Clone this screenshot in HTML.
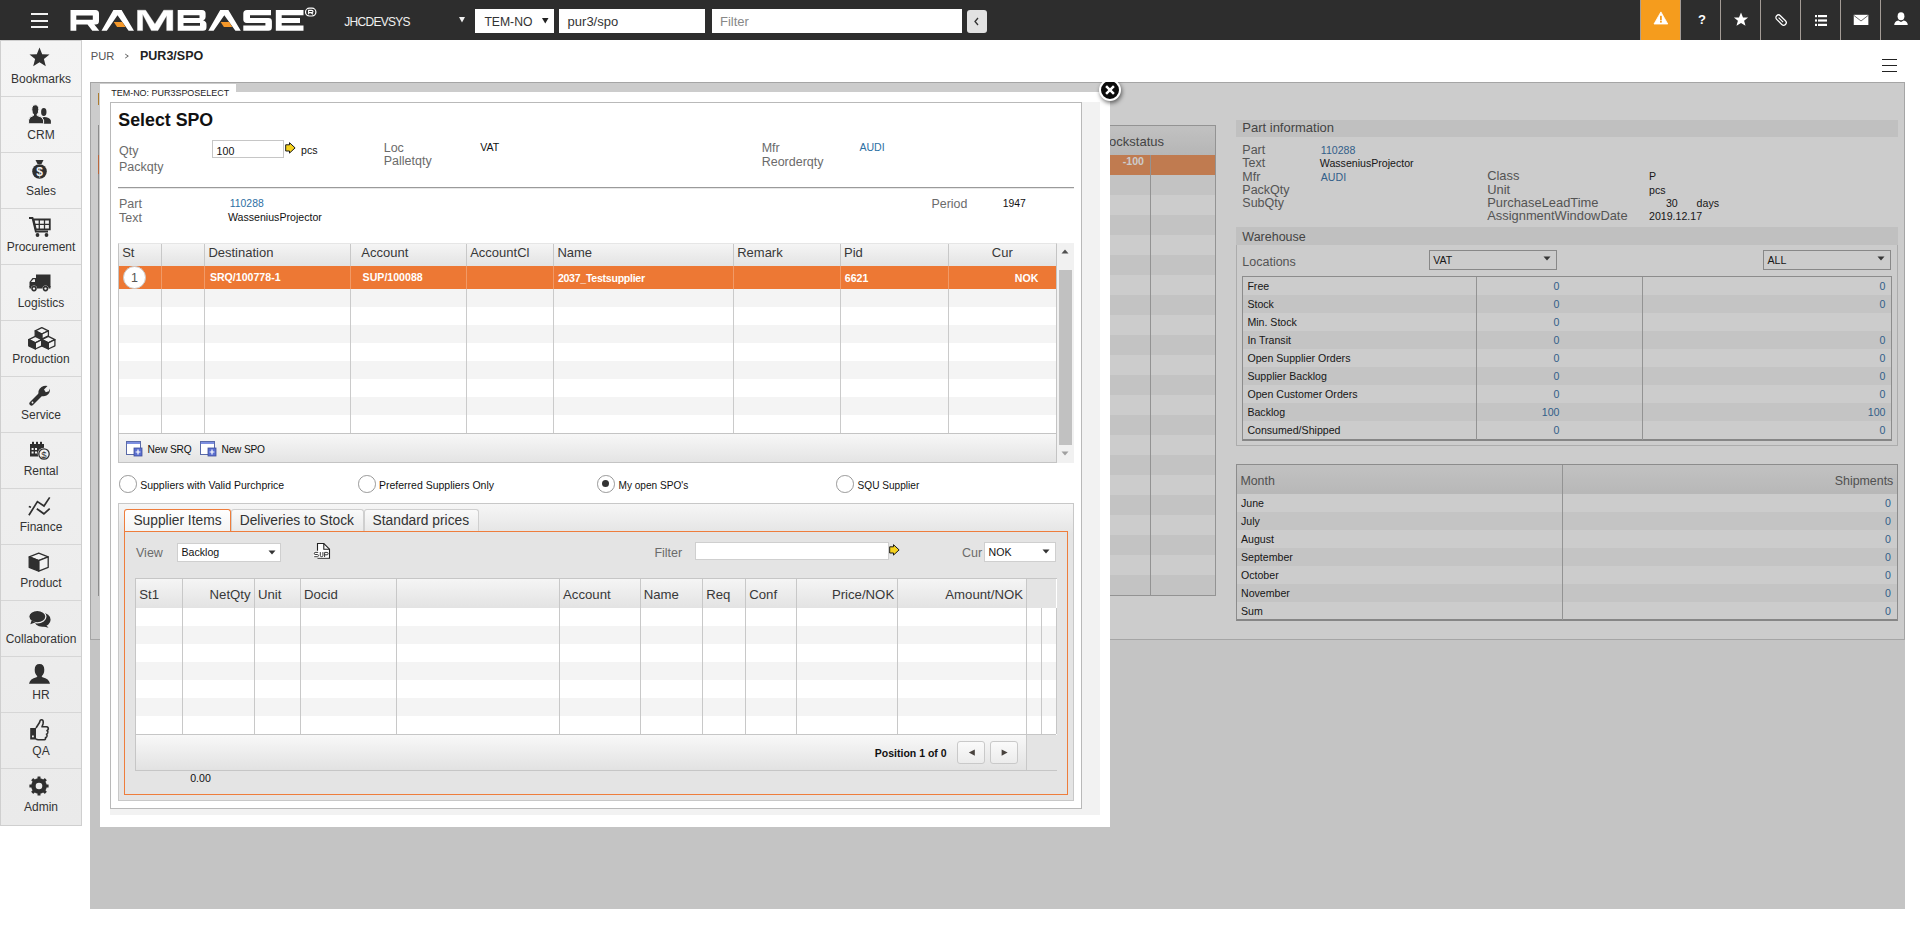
<!DOCTYPE html>
<html><head><meta charset="utf-8"><title>RamBase</title>
<style>
html,body{margin:0;padding:0;}
body{width:1920px;height:937px;overflow:hidden;position:relative;background:#fff;font-family:"Liberation Sans",sans-serif;}
.t{position:absolute;line-height:1;white-space:nowrap;}
.r{position:absolute;box-sizing:border-box;}
</style></head><body>
<div class="r" style="left:0px;top:0px;width:1920px;height:40px;background:#2d2d2d;"></div>
<div class="r" style="left:31px;top:12.7px;width:17px;height:2px;background:#f2f2f2;"></div>
<div class="r" style="left:31px;top:19.7px;width:17px;height:2px;background:#f2f2f2;"></div>
<div class="r" style="left:31px;top:25.7px;width:17px;height:2px;background:#f2f2f2;"></div>
<svg class="r" style="left:0;top:0" width="330" height="40" viewBox="0 0 330 40">
<path fill="#fff" fill-rule="evenodd" d="
M70.5 10 H95.5 Q99 10 99 13.5 V21 Q99 24.5 95.5 24.5 H94.3 L99.3 30.8 H92.3 L87.5 24.5 H76.3 V30.8 H70.5 Z
M76.3 15.6 V19.8 H92.8 V15.6 Z"/>
<path fill="#fff" fill-rule="evenodd" d="M101.5 30.8 L113.4 10 H121.6 L134 30.8 H128.6 L117.5 15.3 L106.8 30.8 Z"/>
<path fill="#f4982a" d="M113.8 22.1 H122.3 L125.5 27 H117.1 Z"/>
<path fill="#fff" stroke="#fff" stroke-width="0.4" stroke-linejoin="round" d="M137.5 10.2 H145.6 L154.9 24.2 L163.7 10.2 H172.8 V30.6 H166.7 V15.4 L157.9 30.6 H151.4 L142.6 14.1 V30.6 H137.5 Z"/>
<path fill="#fff" fill-rule="evenodd" d="M177.7 10 H202 Q205.6 10 205.6 13.5 V17 Q205.6 19.8 203.2 20.6 Q206.5 21.4 206.5 24.5 V27.3 Q206.5 30.8 203 30.8 H177.7 Z
M183.5 15.3 V18 H199.5 V15.3 Z M183.5 23.1 V25.8 H200 V23.1 Z"/>
<path fill="#fff" fill-rule="evenodd" d="M208.3 30.8 L220.2 10 H228.4 L240.8 30.8 H235.4 L224.3 15.3 L213.6 30.8 Z"/>
<path fill="#f4982a" d="M220.6 22.1 H229.1 L232.3 27 H223.9 Z"/>
<path fill="#fff" d="M247 10 H271 V15.2 H250 V18.1 H268.5 Q271.9 18.1 271.9 21.5 V27.3 Q271.9 30.8 268.5 30.8 H243.3 V25.6 H265.4 V22.9 H246.8 Q243.3 22.9 243.3 19.5 V13.5 Q243.3 10 247 10 Z"/>
<path fill="#fff" d="M275.8 10 H303.5 V15.2 H281.7 V18.1 H300 V22.9 H281.7 V25.6 H303.5 V30.8 H275.8 Z"/>
<rect x="305.5" y="8.2" width="10.4" height="7.8" rx="3.9" fill="none" stroke="#fff" stroke-width="1.2"/>
<path fill="none" stroke="#fff" stroke-width="1.1" d="M308.6 14.2 V10.4 H311.6 Q313 10.4 313 11.5 Q313 12.6 311.6 12.6 H308.6 M311 12.6 L313 14.2"/>
</svg>
<div class="t" style="top:16.00px;font-size:12px;color:#f0f0f0;left:344.20px;letter-spacing:-0.7px;">JHCDEVSYS</div>
<svg class="r" style="left:459px;top:17px;" width="7" height="6" viewBox="0 0 7 6"><path d="M0 0 H6 L3 5.5 Z" fill="#f0f0f0"/></svg>
<div class="r" style="left:475px;top:9px;width:79px;height:24px;background:#fff;"></div>
<div class="t" style="top:16.00px;font-size:12.2px;color:#333;left:484.40px;">TEM-NO</div>
<svg class="r" style="left:541.5px;top:17.5px;" width="7" height="6" viewBox="0 0 7 6"><path d="M0 0 H6.5 L3.25 5.5 Z" fill="#222"/></svg>
<div class="r" style="left:559px;top:9px;width:146px;height:24px;background:#fff;"></div>
<div class="t" style="top:15.00px;font-size:13px;color:#333;left:567.60px;">pur3/spo</div>
<div class="r" style="left:712px;top:9px;width:250px;height:24px;background:#fff;"></div>
<div class="t" style="top:15.00px;font-size:13px;color:#888;left:720.00px;">Filter</div>
<div class="r" style="left:967px;top:9.5px;width:19.5px;height:23px;background:#e2e2e2;border-radius:3px;"></div>
<svg class="r" style="left:973px;top:17px;" width="8" height="9" viewBox="0 0 8 9"><path d="M5 1 L2 4.5 L5 8" fill="none" stroke="#333" stroke-width="1.3"/></svg>
<div class="r" style="left:1641px;top:0px;width:39px;height:40px;background:#f59c1d;"></div>
<div class="r" style="left:1640px;top:0px;width:1px;height:40px;background:#a39b95;"></div>
<div class="r" style="left:1680px;top:0px;width:1px;height:40px;background:#a39b95;"></div>
<div class="r" style="left:1720px;top:0px;width:1px;height:40px;background:#a39b95;"></div>
<div class="r" style="left:1760px;top:0px;width:1px;height:40px;background:#a39b95;"></div>
<div class="r" style="left:1800px;top:0px;width:1px;height:40px;background:#a39b95;"></div>
<div class="r" style="left:1840px;top:0px;width:1px;height:40px;background:#a39b95;"></div>
<div class="r" style="left:1880px;top:0px;width:1px;height:40px;background:#a39b95;"></div>
<svg class="r" style="left:1650px;top:9.4px;" width="22" height="18" viewBox="0 0 22 18"><path d="M4 15 L10.9 2.9 L17.8 15 Z" fill="#fff" stroke="#fff" stroke-width="0.8" stroke-linejoin="round"/><rect x="10" y="6.8" width="1.8" height="4.6" fill="#f59c1d"/><rect x="10" y="12" width="1.8" height="1.6" fill="#f59c1d"/></svg>
<div class="t" style="top:13.00px;font-size:13px;color:#fff;font-weight:700;left:1401.90px;width:600px;text-align:center;">?</div>
<svg class="r" style="left:1733px;top:12px;" width="17" height="15" viewBox="0 0 17 15"><path d="M8 0.5 L10 5.4 L15.1 5.6 L11.1 8.8 L12.5 13.7 L8 10.9 L3.5 13.7 L4.9 8.8 L0.9 5.6 L6 5.4 Z" fill="#fff"/></svg>
<svg class="r" style="left:1773px;top:12px;" width="16" height="16" viewBox="0 0 16 16"><g transform="rotate(-45 8 8)"><rect x="5.4" y="1.9" width="5.2" height="12.4" rx="2.6" fill="none" stroke="#fff" stroke-width="1.3"/><path d="M8 4.6 V11" stroke="#fff" stroke-width="1.1"/></g></svg>
<svg class="r" style="left:1813px;top:13px;" width="16" height="14" viewBox="0 0 16 14"><rect x="2" y="2" width="2" height="2.2" fill="#fff"/><rect x="5" y="2" width="9" height="2.2" fill="#fff"/><rect x="2" y="6.4" width="2" height="2.2" fill="#fff"/><rect x="5" y="6.4" width="9" height="2.2" fill="#fff"/><rect x="2" y="10.8" width="2" height="2.2" fill="#fff"/><rect x="5" y="10.8" width="9" height="2.2" fill="#fff"/></svg>
<svg class="r" style="left:1853px;top:14px;" width="16" height="12" viewBox="0 0 16 12"><rect x="0.75" y="0.8" width="14.6" height="10.2" fill="#fff"/><path d="M1 1.5 L8 7 L15 1.5" fill="none" stroke="#2d2d2d" stroke-width="0.7"/></svg>
<svg class="r" style="left:1893px;top:12px;" width="16" height="14" viewBox="0 0 16 14"><ellipse cx="8" cy="4.3" rx="3.4" ry="4" fill="#fff"/><path d="M1.2 13 Q1.5 9.5 5.3 8.6 L8 10 L10.7 8.6 Q14.5 9.5 14.8 13 Z" fill="#fff"/></svg>
<div class="r" style="left:0px;top:40px;width:82px;height:786px;background:linear-gradient(#f4f4f4,#eaeaea);border-left:1px solid #cfcfcf;border-right:1px solid #cfcfcf;border-top:1px solid #cfcfcf;border-bottom:1px solid #cfcfcf;"></div>
<div class="t" style="top:73.00px;font-size:12px;color:#333;left:-259.00px;width:600px;text-align:center;">Bookmarks</div>
<div class="r" style="left:1px;top:96px;width:80px;height:1px;background:#d6d6d6;"></div>
<div class="t" style="top:129.00px;font-size:12px;color:#333;left:-259.00px;width:600px;text-align:center;">CRM</div>
<div class="r" style="left:1px;top:152px;width:80px;height:1px;background:#d6d6d6;"></div>
<div class="t" style="top:185.00px;font-size:12px;color:#333;left:-259.00px;width:600px;text-align:center;">Sales</div>
<div class="r" style="left:1px;top:208px;width:80px;height:1px;background:#d6d6d6;"></div>
<div class="t" style="top:241.00px;font-size:12px;color:#333;left:-259.00px;width:600px;text-align:center;">Procurement</div>
<div class="r" style="left:1px;top:264px;width:80px;height:1px;background:#d6d6d6;"></div>
<div class="t" style="top:297.00px;font-size:12px;color:#333;left:-259.00px;width:600px;text-align:center;">Logistics</div>
<div class="r" style="left:1px;top:320px;width:80px;height:1px;background:#d6d6d6;"></div>
<div class="t" style="top:353.00px;font-size:12px;color:#333;left:-259.00px;width:600px;text-align:center;">Production</div>
<div class="r" style="left:1px;top:376px;width:80px;height:1px;background:#d6d6d6;"></div>
<div class="t" style="top:409.00px;font-size:12px;color:#333;left:-259.00px;width:600px;text-align:center;">Service</div>
<div class="r" style="left:1px;top:432px;width:80px;height:1px;background:#d6d6d6;"></div>
<div class="t" style="top:465.00px;font-size:12px;color:#333;left:-259.00px;width:600px;text-align:center;">Rental</div>
<div class="r" style="left:1px;top:488px;width:80px;height:1px;background:#d6d6d6;"></div>
<div class="t" style="top:521.00px;font-size:12px;color:#333;left:-259.00px;width:600px;text-align:center;">Finance</div>
<div class="r" style="left:1px;top:544px;width:80px;height:1px;background:#d6d6d6;"></div>
<div class="t" style="top:577.00px;font-size:12px;color:#333;left:-259.00px;width:600px;text-align:center;">Product</div>
<div class="r" style="left:1px;top:600px;width:80px;height:1px;background:#d6d6d6;"></div>
<div class="t" style="top:633.00px;font-size:12px;color:#333;left:-259.00px;width:600px;text-align:center;">Collaboration</div>
<div class="r" style="left:1px;top:656px;width:80px;height:1px;background:#d6d6d6;"></div>
<div class="t" style="top:689.00px;font-size:12px;color:#333;left:-259.00px;width:600px;text-align:center;">HR</div>
<div class="r" style="left:1px;top:712px;width:80px;height:1px;background:#d6d6d6;"></div>
<div class="t" style="top:745.00px;font-size:12px;color:#333;left:-259.00px;width:600px;text-align:center;">QA</div>
<div class="r" style="left:1px;top:768px;width:80px;height:1px;background:#d6d6d6;"></div>
<div class="t" style="top:801.00px;font-size:12px;color:#333;left:-259.00px;width:600px;text-align:center;">Admin</div>
<svg class="r" style="left:29px;top:47px;" width="22" height="21" viewBox="0 0 22 21"><path d="M10.5 0.5 L13.2 7.2 L20.5 7.5 L14.9 12 L16.8 19.3 L10.5 15.3 L4.2 19.3 L6.1 12 L0.5 7.5 L7.8 7.2 Z" fill="#2f2f2f"/></svg>
<svg class="r" style="left:28px;top:104px;" width="24" height="21" viewBox="0 0 24 21"><ellipse cx="15.8" cy="8" rx="2.7" ry="4" fill="#2f2f2f"/><path d="M13.5 19.8 V15.5 Q14 13.3 16 13 Q21.5 13.3 22.9 16.5 V19.8 Z" fill="#2f2f2f"/><path d="M0.6 19.8 V16 Q1.3 12.3 5.3 11.6 L5.8 11 Q3.8 9.5 3.8 5.5 Q3.8 0.8 7.3 0.8 Q10.8 0.8 10.8 5.5 Q10.8 9.5 8.8 11 L9.3 11.6 Q14.3 12.3 15.6 16 V19.8 Z" fill="#2f2f2f" stroke="#f3f3f3" stroke-width="1"/></svg>
<svg class="r" style="left:31px;top:159px;" width="18" height="21" viewBox="0 0 18 21"><path d="M4.5 1 H12.5 L10.5 5 H6.5 Z" fill="#2f2f2f"/><circle cx="8.5" cy="12.5" r="7.3" fill="#2f2f2f"/><text x="8.5" y="17" font-family="Liberation Sans" font-weight="700" font-size="12" fill="#f2f2f2" text-anchor="middle">$</text></svg>
<svg class="r" style="left:28px;top:216px;" width="24" height="22" viewBox="0 0 24 22"><path d="M1 2 H4.5 L7.8 15.5 H20" fill="none" stroke="#2f2f2f" stroke-width="1.8"/><path d="M5.5 3.5 H21.8 V13.3 H7.8 Z" fill="none" stroke="#2f2f2f" stroke-width="1.8"/><path d="M11.3 3.5 V13.3 M16.5 3.5 V13.3 M6.5 8.4 H21.5" stroke="#2f2f2f" stroke-width="1.3"/><circle cx="9.5" cy="19" r="1.9" fill="#2f2f2f"/><circle cx="18.5" cy="19" r="1.9" fill="#2f2f2f"/></svg>
<svg class="r" style="left:28px;top:273px;" width="24" height="19" viewBox="0 0 24 19"><path d="M8 1.5 H22.5 V14 H8 Z" fill="#2f2f2f"/><path d="M1.5 14 V9 L4.5 5 H8.5 V14 Z" fill="#2f2f2f"/><path d="M3 9 L5.2 6.3 H7 V9 Z" fill="#f2f2f2"/><rect x="1.5" y="13" width="21" height="2.5" fill="#2f2f2f"/><circle cx="6" cy="15.6" r="3" fill="#f2f2f2"/><circle cx="17.5" cy="15.6" r="3" fill="#f2f2f2"/><circle cx="6" cy="15.6" r="2" fill="#f2f2f2" stroke="#2f2f2f" stroke-width="1.6"/><circle cx="17.5" cy="15.6" r="2" fill="#f2f2f2" stroke="#2f2f2f" stroke-width="1.6"/></svg>
<svg class="r" style="left:24px;top:322px;" width="36" height="30" viewBox="0 0 36 30"><path d="M17.8 5.6 L24.4 8.8 L17.8 12.0 L11.200000000000001 8.8 Z" fill="#f2f2f2" stroke="#2f2f2f" stroke-width="1.3" stroke-linejoin="round"/><path d="M17.8 12.0 L24.4 8.8 L24.4 13.8 L17.8 17.0 Z" fill="#f2f2f2" stroke="#2f2f2f" stroke-width="1.3" stroke-linejoin="round"/><path d="M11.200000000000001 8.8 L17.8 12.0 L17.8 17.0 L11.200000000000001 13.8 Z" fill="#2f2f2f" stroke="#2f2f2f" stroke-width="1.3" stroke-linejoin="round"/><path d="M11.3 14.4 L17.9 17.6 L11.3 20.8 L4.700000000000001 17.6 Z" fill="#f2f2f2" stroke="#2f2f2f" stroke-width="1.3" stroke-linejoin="round"/><path d="M11.3 20.8 L17.9 17.6 L17.9 23.8 L11.3 27.0 Z" fill="#f2f2f2" stroke="#2f2f2f" stroke-width="1.3" stroke-linejoin="round"/><path d="M4.700000000000001 17.6 L11.3 20.8 L11.3 27.0 L4.700000000000001 23.8 Z" fill="#2f2f2f" stroke="#2f2f2f" stroke-width="1.3" stroke-linejoin="round"/><path d="M24.3 14.4 L30.9 17.6 L24.3 20.8 L17.700000000000003 17.6 Z" fill="#f2f2f2" stroke="#2f2f2f" stroke-width="1.3" stroke-linejoin="round"/><path d="M24.3 20.8 L30.9 17.6 L30.9 23.8 L24.3 27.0 Z" fill="#f2f2f2" stroke="#2f2f2f" stroke-width="1.3" stroke-linejoin="round"/><path d="M17.700000000000003 17.6 L24.3 20.8 L24.3 27.0 L17.700000000000003 23.8 Z" fill="#2f2f2f" stroke="#2f2f2f" stroke-width="1.3" stroke-linejoin="round"/></svg>
<svg class="r" style="left:29px;top:384px;" width="22" height="22" viewBox="0 0 22 22"><path d="M2.5 19.5 L11.5 10.5" stroke="#2f2f2f" stroke-width="4.2" stroke-linecap="round"/><path d="M10 12 Q8 6 12.5 3 Q15.5 1.3 18.5 2 L15 5.5 L16.8 8.2 L19.8 7.2 L20.8 4.5 Q21.5 9.5 17.5 11.5 Q14.5 12.8 12 11.7 Z" fill="#2f2f2f"/><circle cx="3.5" cy="18.5" r="0.9" fill="#f2f2f2"/></svg>
<svg class="r" style="left:29px;top:441px;" width="22" height="20" viewBox="0 0 22 20"><rect x="1" y="3" width="14" height="12.5" fill="#2f2f2f"/><rect x="3" y="0.8" width="2" height="3.5" fill="#2f2f2f"/><rect x="7" y="0.8" width="2" height="3.5" fill="#2f2f2f"/><rect x="11" y="0.8" width="2" height="3.5" fill="#2f2f2f"/><path d="M2.6 7 H4.6 V9 H2.6 Z M6 7 H8 V9 H6 Z M2.6 10.5 H4.6 V12.5 H2.6 Z M6 10.5 H8 V12.5 H6 Z" fill="#f2f2f2"/><circle cx="15" cy="13" r="6.3" fill="#f2f2f2"/><circle cx="15" cy="13" r="5.2" fill="none" stroke="#2f2f2f" stroke-width="1.3"/><text x="15" y="16.7" font-family="Liberation Sans" font-size="9.5" fill="#2f2f2f" text-anchor="middle">$</text></svg>
<svg class="r" style="left:27px;top:496px;" width="25" height="21" viewBox="0 0 25 21"><path d="M1.9 19.3 L10.4 5.6 L17 10 L22.7 1.4" fill="none" stroke="#2f2f2f" stroke-width="1.7" stroke-linejoin="miter"/><path d="M9.8 12.7 L16.9 17.8 L22.7 12.6" fill="none" stroke="#2f2f2f" stroke-width="1.7"/><path d="M1.8 10.5 L4 11.3" stroke="#2f2f2f" stroke-width="1.5"/></svg>
<svg class="r" style="left:27px;top:551px;" width="23" height="23" viewBox="0 0 23 23"><path d="M11.7 2.2 L21.2 5.9 L11.7 9.600000000000001 L2.1999999999999993 5.9 Z" fill="#f2f2f2" stroke="#2f2f2f" stroke-width="1.3" stroke-linejoin="round"/><path d="M11.7 9.600000000000001 L21.2 5.9 L21.2 16.4 L11.7 20.1 Z" fill="#f2f2f2" stroke="#2f2f2f" stroke-width="1.3" stroke-linejoin="round"/><path d="M2.1999999999999993 5.9 L11.7 9.600000000000001 L11.7 20.1 L2.1999999999999993 16.4 Z" fill="#2f2f2f" stroke="#2f2f2f" stroke-width="1.3" stroke-linejoin="round"/></svg>
<svg class="r" style="left:27px;top:609px;" width="25" height="21" viewBox="0 0 25 21"><ellipse cx="15.2" cy="10.8" rx="8.4" ry="7" fill="#2f2f2f"/><path d="M18 15 L21.6 18.8 L15.5 17.2 Z" fill="#2f2f2f"/><ellipse cx="10.3" cy="7.6" rx="8.6" ry="6.2" fill="#2f2f2f" stroke="#efefef" stroke-width="1.3"/><path d="M4.6 11.6 L3.3 15.2 L8.8 13.2 Z" fill="#2f2f2f"/></svg>
<svg class="r" style="left:28px;top:663px;" width="23" height="22" viewBox="0 0 23 22"><path d="M11.5 1 Q16.3 1 16.3 6.8 Q16.3 11.2 13.6 13.2 L14.5 14.2 Q21 15.6 22 20.8 H1 Q2 15.6 8.5 14.2 L9.4 13.2 Q6.7 11.2 6.7 6.8 Q6.7 1 11.5 1 Z" fill="#2f2f2f"/></svg>
<svg class="r" style="left:29px;top:718px;" width="21" height="23" viewBox="0 0 21 23"><path d="M7 10 L10.5 4.5 Q11 1.5 12.8 1.7 Q14.8 2 14 6 L13 8.7 H17.5 Q19.5 9 19.3 11 Q19 12.3 18 12.5 Q19.3 13.5 18.7 15 Q18.2 16 17.5 16.2 Q18.5 17 17.8 18.6 Q17.2 19.5 16.5 19.6 Q17 21.3 15.2 21.7 H9.2 Q7.8 21.7 7 20.8" fill="none" stroke="#2f2f2f" stroke-width="1.6" stroke-linejoin="round"/><rect x="1.2" y="10" width="5.8" height="11.5" fill="#2f2f2f"/><rect x="3" y="17.5" width="1.8" height="1.8" fill="#f2f2f2"/></svg>
<svg class="r" style="left:29.4px;top:776.4px;" width="20" height="20" viewBox="0 0 20 20"><circle cx="10" cy="10" r="7.8" fill="#2f2f2f"/><rect x="8.5" y="0.4" width="3" height="19.2" rx="0.3" fill="#2f2f2f" transform="rotate(0 10 10)"/><rect x="8.5" y="0.4" width="3" height="19.2" rx="0.3" fill="#2f2f2f" transform="rotate(45 10 10)"/><rect x="8.5" y="0.4" width="3" height="19.2" rx="0.3" fill="#2f2f2f" transform="rotate(90 10 10)"/><rect x="8.5" y="0.4" width="3" height="19.2" rx="0.3" fill="#2f2f2f" transform="rotate(135 10 10)"/><circle cx="10" cy="10" r="3.3" fill="#ececec"/></svg>
<div class="t" style="top:51.00px;font-size:11.2px;color:#555;left:90.80px;">PUR</div>
<svg class="r" style="left:124px;top:53px;" width="6" height="6" viewBox="0 0 6 6"><path d="M1.2 1.1 L4.3 3.1 L1.2 5.1" fill="none" stroke="#666" stroke-width="1"/></svg>
<div class="t" style="top:50.00px;font-size:12.5px;color:#222;font-weight:700;left:140.00px;">PUR3/SPO</div>
<div class="r" style="left:1882px;top:58.5px;width:15px;height:1.3px;background:#222;"></div>
<div class="r" style="left:1882px;top:64.5px;width:15px;height:1.3px;background:#222;"></div>
<div class="r" style="left:1882px;top:71px;width:15px;height:1.3px;background:#222;"></div>
<div class="r" style="left:90px;top:82px;width:1815px;height:827px;background:#f5f5f5;"></div>
<div class="r" style="left:90px;top:82px;width:1815px;height:558px;background:#fff;border:1px solid #cfcfcf;"></div>
<div class="r" style="left:98px;top:125px;width:1px;height:471px;background:#b0b0b0;"></div>
<div class="r" style="left:98px;top:93px;width:1px;height:12px;background:#d89a3a;"></div>
<div class="r" style="left:98px;top:155px;width:1px;height:19px;background:#e8804a;"></div>
<div class="r" style="left:1030px;top:125px;width:186px;height:471px;background:#fff;border:1px solid #b8b8b8;"></div>
<div class="r" style="left:1031px;top:126px;width:184px;height:29px;background:linear-gradient(#f2f2f2,#e4e4e4);"></div>
<div class="t" style="top:135.00px;font-size:13px;color:#555;left:1096.80px;">Stockstatus</div>
<div class="r" style="left:1031px;top:155px;width:184px;height:20px;background:#f09a64;"></div>
<div class="t" style="top:156.00px;font-size:10.6px;color:#fff;font-weight:700;left:544.00px;width:600px;text-align:right;">-100</div>
<div class="r" style="left:1031px;top:175px;width:184px;height:20px;background:#f4f4f4;"></div>
<div class="r" style="left:1031px;top:215px;width:184px;height:20px;background:#f4f4f4;"></div>
<div class="r" style="left:1031px;top:255px;width:184px;height:20px;background:#f4f4f4;"></div>
<div class="r" style="left:1031px;top:295px;width:184px;height:20px;background:#f4f4f4;"></div>
<div class="r" style="left:1031px;top:335px;width:184px;height:20px;background:#f4f4f4;"></div>
<div class="r" style="left:1031px;top:375px;width:184px;height:20px;background:#f4f4f4;"></div>
<div class="r" style="left:1031px;top:415px;width:184px;height:20px;background:#f4f4f4;"></div>
<div class="r" style="left:1031px;top:455px;width:184px;height:20px;background:#f4f4f4;"></div>
<div class="r" style="left:1031px;top:495px;width:184px;height:20px;background:#f4f4f4;"></div>
<div class="r" style="left:1031px;top:535px;width:184px;height:20px;background:#f4f4f4;"></div>
<div class="r" style="left:1031px;top:575px;width:184px;height:20px;background:#f4f4f4;"></div>
<div class="r" style="left:1150px;top:155px;width:1px;height:440px;background:#b8b8b8;"></div>
<div class="r" style="left:1236px;top:120px;width:662px;height:17px;background:#f0f0f0;"></div>
<div class="t" style="top:121.00px;font-size:13px;color:#555;left:1242.30px;">Part information</div>
<div class="t" style="top:144.00px;font-size:12.5px;color:#6a6a6a;left:1242.30px;">Part</div>
<div class="t" style="top:157.00px;font-size:12.5px;color:#6a6a6a;left:1242.30px;">Text</div>
<div class="t" style="top:171.00px;font-size:12.5px;color:#6a6a6a;left:1242.30px;">Mfr</div>
<div class="t" style="top:184.00px;font-size:12.5px;color:#6a6a6a;left:1242.30px;">PackQty</div>
<div class="t" style="top:197.00px;font-size:12.5px;color:#6a6a6a;left:1242.30px;">SubQty</div>
<div class="t" style="top:145.00px;font-size:10.6px;color:#3f78ad;left:1320.80px;">110288</div>
<div class="t" style="top:158.00px;font-size:10.6px;color:#222;left:1319.80px;">WasseniusProjector</div>
<div class="t" style="top:172.00px;font-size:10.6px;color:#3f78ad;left:1320.80px;">AUDI</div>
<div class="t" style="top:170.00px;font-size:12.9px;color:#6a6a6a;left:1487.20px;">Class</div>
<div class="t" style="top:184.00px;font-size:12.9px;color:#6a6a6a;left:1487.20px;">Unit</div>
<div class="t" style="top:197.00px;font-size:12.9px;color:#6a6a6a;left:1487.20px;">PurchaseLeadTime</div>
<div class="t" style="top:210.00px;font-size:12.9px;color:#6a6a6a;left:1487.20px;">AssignmentWindowDate</div>
<div class="t" style="top:171.00px;font-size:10.6px;color:#222;left:1649.00px;">P</div>
<div class="t" style="top:185.00px;font-size:10.6px;color:#222;left:1649.00px;">pcs</div>
<div class="t" style="top:198.00px;font-size:10.6px;color:#222;left:1665.90px;">30</div>
<div class="t" style="top:198.00px;font-size:10.6px;color:#222;left:1696.60px;">days</div>
<div class="t" style="top:211.00px;font-size:10.6px;color:#222;left:1649.00px;">2019.12.17</div>
<div class="r" style="left:1236px;top:227px;width:662px;height:18px;background:#f0f0f0;"></div>
<div class="t" style="top:231.00px;font-size:12.5px;color:#555;left:1242.30px;">Warehouse</div>
<div class="r" style="left:1236px;top:245px;width:662px;height:201px;border:1px solid #d8d8d8;border-top:none;"></div>
<div class="t" style="top:256.00px;font-size:12.5px;color:#6a6a6a;left:1242.30px;">Locations</div>
<div class="r" style="left:1429px;top:250px;width:128px;height:20px;background:#fff;border:1px solid #aaa;"></div>
<div class="t" style="top:255.00px;font-size:10.6px;color:#222;left:1433.30px;">VAT</div>
<svg class="r" style="left:1543px;top:256px;" width="9" height="6" viewBox="0 0 9 6"><path d="M0.5 0.5 H7.5 L4 4.5 Z" fill="#444"/></svg>
<div class="r" style="left:1763px;top:250px;width:128px;height:20px;background:#fff;border:1px solid #aaa;"></div>
<div class="t" style="top:255.00px;font-size:10.6px;color:#222;left:1767.50px;">ALL</div>
<svg class="r" style="left:1877px;top:256px;" width="9" height="6" viewBox="0 0 9 6"><path d="M0.5 0.5 H7.5 L4 4.5 Z" fill="#444"/></svg>
<div class="r" style="left:1242px;top:276px;width:650px;height:165px;background:#fff;border:1px solid #b0b0b0;border-bottom:2px solid #a8a8a8;"></div>
<div class="t" style="top:281.00px;font-size:10.6px;color:#222;left:1247.40px;">Free</div>
<div class="t" style="top:281.00px;font-size:10.6px;color:#3f78ad;left:959.50px;width:600px;text-align:right;">0</div>
<div class="t" style="top:281.00px;font-size:10.6px;color:#3f78ad;left:1285.50px;width:600px;text-align:right;">0</div>
<div class="r" style="left:1243px;top:295px;width:648px;height:18px;background:#f6f6f6;"></div>
<div class="t" style="top:299.00px;font-size:10.6px;color:#222;left:1247.40px;">Stock</div>
<div class="t" style="top:299.00px;font-size:10.6px;color:#3f78ad;left:959.50px;width:600px;text-align:right;">0</div>
<div class="t" style="top:299.00px;font-size:10.6px;color:#3f78ad;left:1285.50px;width:600px;text-align:right;">0</div>
<div class="t" style="top:317.00px;font-size:10.6px;color:#222;left:1247.40px;">Min. Stock</div>
<div class="t" style="top:317.00px;font-size:10.6px;color:#3f78ad;left:959.50px;width:600px;text-align:right;">0</div>
<div class="r" style="left:1243px;top:331px;width:648px;height:18px;background:#f6f6f6;"></div>
<div class="t" style="top:335.00px;font-size:10.6px;color:#222;left:1247.40px;">In Transit</div>
<div class="t" style="top:335.00px;font-size:10.6px;color:#3f78ad;left:959.50px;width:600px;text-align:right;">0</div>
<div class="t" style="top:335.00px;font-size:10.6px;color:#3f78ad;left:1285.50px;width:600px;text-align:right;">0</div>
<div class="t" style="top:353.00px;font-size:10.6px;color:#222;left:1247.40px;">Open Supplier Orders</div>
<div class="t" style="top:353.00px;font-size:10.6px;color:#3f78ad;left:959.50px;width:600px;text-align:right;">0</div>
<div class="t" style="top:353.00px;font-size:10.6px;color:#3f78ad;left:1285.50px;width:600px;text-align:right;">0</div>
<div class="r" style="left:1243px;top:367px;width:648px;height:18px;background:#f6f6f6;"></div>
<div class="t" style="top:371.00px;font-size:10.6px;color:#222;left:1247.40px;">Supplier Backlog</div>
<div class="t" style="top:371.00px;font-size:10.6px;color:#3f78ad;left:959.50px;width:600px;text-align:right;">0</div>
<div class="t" style="top:371.00px;font-size:10.6px;color:#3f78ad;left:1285.50px;width:600px;text-align:right;">0</div>
<div class="t" style="top:389.00px;font-size:10.6px;color:#222;left:1247.40px;">Open Customer Orders</div>
<div class="t" style="top:389.00px;font-size:10.6px;color:#3f78ad;left:959.50px;width:600px;text-align:right;">0</div>
<div class="t" style="top:389.00px;font-size:10.6px;color:#3f78ad;left:1285.50px;width:600px;text-align:right;">0</div>
<div class="r" style="left:1243px;top:403px;width:648px;height:18px;background:#f6f6f6;"></div>
<div class="t" style="top:407.00px;font-size:10.6px;color:#222;left:1247.40px;">Backlog</div>
<div class="t" style="top:407.00px;font-size:10.6px;color:#3f78ad;left:959.50px;width:600px;text-align:right;">100</div>
<div class="t" style="top:407.00px;font-size:10.6px;color:#3f78ad;left:1285.50px;width:600px;text-align:right;">100</div>
<div class="t" style="top:425.00px;font-size:10.6px;color:#222;left:1247.40px;">Consumed/Shipped</div>
<div class="t" style="top:425.00px;font-size:10.6px;color:#3f78ad;left:959.50px;width:600px;text-align:right;">0</div>
<div class="t" style="top:425.00px;font-size:10.6px;color:#3f78ad;left:1285.50px;width:600px;text-align:right;">0</div>
<div class="r" style="left:1476px;top:277px;width:1px;height:163px;background:#b8b8b8;"></div>
<div class="r" style="left:1642px;top:277px;width:1px;height:163px;background:#b8b8b8;"></div>
<div class="r" style="left:1236px;top:464px;width:662px;height:157px;background:#fff;border:1px solid #b0b0b0;border-bottom:2px solid #a8a8a8;"></div>
<div class="r" style="left:1237px;top:465px;width:660px;height:29px;background:linear-gradient(#f2f2f2,#e6e6e6);"></div>
<div class="t" style="top:475.00px;font-size:12.4px;color:#666;left:1240.40px;">Month</div>
<div class="t" style="top:475.00px;font-size:12.4px;color:#666;left:1293.30px;width:600px;text-align:right;">Shipments</div>
<div class="t" style="top:498.00px;font-size:10.6px;color:#222;left:1241.00px;">June</div>
<div class="t" style="top:498.00px;font-size:10.6px;color:#3f78ad;left:1291.00px;width:600px;text-align:right;">0</div>
<div class="r" style="left:1237px;top:512px;width:660px;height:18px;background:#f6f6f6;"></div>
<div class="t" style="top:516.00px;font-size:10.6px;color:#222;left:1241.00px;">July</div>
<div class="t" style="top:516.00px;font-size:10.6px;color:#3f78ad;left:1291.00px;width:600px;text-align:right;">0</div>
<div class="t" style="top:534.00px;font-size:10.6px;color:#222;left:1241.00px;">August</div>
<div class="t" style="top:534.00px;font-size:10.6px;color:#3f78ad;left:1291.00px;width:600px;text-align:right;">0</div>
<div class="r" style="left:1237px;top:548px;width:660px;height:18px;background:#f6f6f6;"></div>
<div class="t" style="top:552.00px;font-size:10.6px;color:#222;left:1241.00px;">September</div>
<div class="t" style="top:552.00px;font-size:10.6px;color:#3f78ad;left:1291.00px;width:600px;text-align:right;">0</div>
<div class="t" style="top:570.00px;font-size:10.6px;color:#222;left:1241.00px;">October</div>
<div class="t" style="top:570.00px;font-size:10.6px;color:#3f78ad;left:1291.00px;width:600px;text-align:right;">0</div>
<div class="r" style="left:1237px;top:584px;width:660px;height:18px;background:#f6f6f6;"></div>
<div class="t" style="top:588.00px;font-size:10.6px;color:#222;left:1241.00px;">November</div>
<div class="t" style="top:588.00px;font-size:10.6px;color:#3f78ad;left:1291.00px;width:600px;text-align:right;">0</div>
<div class="t" style="top:606.00px;font-size:10.6px;color:#222;left:1241.00px;">Sum</div>
<div class="t" style="top:606.00px;font-size:10.6px;color:#3f78ad;left:1291.00px;width:600px;text-align:right;">0</div>
<div class="r" style="left:1562px;top:465px;width:1px;height:155px;background:#b8b8b8;"></div>
<div class="r" style="left:90px;top:82px;width:1815px;height:827px;background:rgba(0,0,0,0.2);"></div>
<div class="r" style="left:100px;top:84px;width:136px;height:8px;background:#fff;"></div>
<div class="r" style="left:100px;top:92px;width:1010px;height:735px;background:#fff;"></div>
<div class="t" style="top:89.00px;font-size:8.96px;color:#222;left:111.25px;">TEM-NO: PUR3SPOSELECT</div>
<div class="r" style="left:110px;top:102px;width:990px;height:713px;background:#f2f2f2;"></div>
<div class="r" style="left:110px;top:102px;width:972px;height:707px;background:#fff;border:1px solid #b9b9b9;"></div>
<div class="t" style="top:112.00px;font-size:17.8px;color:#111;font-weight:700;left:118.30px;">Select SPO</div>
<div class="t" style="top:145.00px;font-size:12.5px;color:#6b6b6b;left:119.00px;">Qty</div>
<div class="t" style="top:161.00px;font-size:12.5px;color:#6b6b6b;left:119.00px;">Packqty</div>
<div class="r" style="left:212px;top:140px;width:72px;height:18px;background:#fff;border:1px solid #c6c6c6;"></div>
<div class="t" style="top:146.00px;font-size:10.6px;color:#111;left:216.60px;">100</div>
<svg class="r" style="left:284.5px;top:141.5px;" width="12" height="12" viewBox="0 0 12 12"><path d="M0.7 2.8 H4.5 V0.7 L10.1 5.9 L4.5 11.1 V9 H0.7 Z" fill="#f6d21e" stroke="#1a1a1a" stroke-width="1"/></svg>
<div class="t" style="top:145.00px;font-size:10.6px;color:#111;left:301.00px;">pcs</div>
<div class="t" style="top:142.00px;font-size:12.5px;color:#6b6b6b;left:383.70px;">Loc</div>
<div class="t" style="top:155.00px;font-size:12.5px;color:#6b6b6b;left:383.70px;">Palletqty</div>
<div class="t" style="top:142.00px;font-size:10.6px;color:#111;left:480.20px;">VAT</div>
<div class="t" style="top:142.00px;font-size:12.5px;color:#6b6b6b;left:761.70px;">Mfr</div>
<div class="t" style="top:156.00px;font-size:12.5px;color:#6b6b6b;left:761.70px;">Reorderqty</div>
<div class="t" style="top:142.00px;font-size:10.6px;color:#2d6fa3;left:859.40px;">AUDI</div>
<div class="r" style="left:118px;top:187px;width:956px;height:1px;background:#9a9a9a;"></div>
<div class="r" style="left:118px;top:188px;width:956px;height:1px;background:#e8e8e8;"></div>
<div class="t" style="top:198.00px;font-size:12.5px;color:#6b6b6b;left:119.00px;">Part</div>
<div class="t" style="top:212.00px;font-size:12.5px;color:#6b6b6b;left:119.00px;">Text</div>
<div class="t" style="top:199.00px;font-size:10.4px;color:#2d6fa3;left:229.80px;">110288</div>
<div class="t" style="top:212.00px;font-size:10.6px;color:#111;left:228.00px;">WasseniusProjector</div>
<div class="t" style="top:198.00px;font-size:12.4px;color:#6b6b6b;left:931.50px;">Period</div>
<div class="t" style="top:199.00px;font-size:10.4px;color:#111;left:1002.70px;">1947</div>
<div class="r" style="left:118px;top:243px;width:939px;height:220px;background:#fff;border:1px solid #c4c4c4;border-top-color:#e6e6e6;"></div>
<div class="r" style="left:119px;top:244px;width:937px;height:22px;background:linear-gradient(#f5f5f5,#e3e3e3);"></div>
<div class="r" style="left:119px;top:266px;width:937px;height:23px;background:#ed7834;"></div>
<div class="r" style="left:119px;top:289px;width:937px;height:18px;background:#f4f4f4;"></div>
<div class="r" style="left:119px;top:325px;width:937px;height:18px;background:#f4f4f4;"></div>
<div class="r" style="left:119px;top:361px;width:937px;height:18px;background:#f4f4f4;"></div>
<div class="r" style="left:119px;top:397px;width:937px;height:18px;background:#f4f4f4;"></div>
<div class="r" style="left:161px;top:244px;width:1px;height:22px;background:#c8c8c8;"></div>
<div class="r" style="left:161px;top:266px;width:1px;height:23px;background:rgba(255,255,255,0.25);"></div>
<div class="r" style="left:161px;top:289px;width:1px;height:144px;background:#cacaca;"></div>
<div class="r" style="left:204px;top:244px;width:1px;height:22px;background:#c8c8c8;"></div>
<div class="r" style="left:204px;top:266px;width:1px;height:23px;background:rgba(255,255,255,0.25);"></div>
<div class="r" style="left:204px;top:289px;width:1px;height:144px;background:#cacaca;"></div>
<div class="r" style="left:350px;top:244px;width:1px;height:22px;background:#c8c8c8;"></div>
<div class="r" style="left:350px;top:266px;width:1px;height:23px;background:rgba(255,255,255,0.25);"></div>
<div class="r" style="left:350px;top:289px;width:1px;height:144px;background:#cacaca;"></div>
<div class="r" style="left:466px;top:244px;width:1px;height:22px;background:#c8c8c8;"></div>
<div class="r" style="left:466px;top:266px;width:1px;height:23px;background:rgba(255,255,255,0.25);"></div>
<div class="r" style="left:466px;top:289px;width:1px;height:144px;background:#cacaca;"></div>
<div class="r" style="left:553px;top:244px;width:1px;height:22px;background:#c8c8c8;"></div>
<div class="r" style="left:553px;top:266px;width:1px;height:23px;background:rgba(255,255,255,0.25);"></div>
<div class="r" style="left:553px;top:289px;width:1px;height:144px;background:#cacaca;"></div>
<div class="r" style="left:733px;top:244px;width:1px;height:22px;background:#c8c8c8;"></div>
<div class="r" style="left:733px;top:266px;width:1px;height:23px;background:rgba(255,255,255,0.25);"></div>
<div class="r" style="left:733px;top:289px;width:1px;height:144px;background:#cacaca;"></div>
<div class="r" style="left:840px;top:244px;width:1px;height:22px;background:#c8c8c8;"></div>
<div class="r" style="left:840px;top:266px;width:1px;height:23px;background:rgba(255,255,255,0.25);"></div>
<div class="r" style="left:840px;top:289px;width:1px;height:144px;background:#cacaca;"></div>
<div class="r" style="left:948px;top:244px;width:1px;height:22px;background:#c8c8c8;"></div>
<div class="r" style="left:948px;top:266px;width:1px;height:23px;background:rgba(255,255,255,0.25);"></div>
<div class="r" style="left:948px;top:289px;width:1px;height:144px;background:#cacaca;"></div>
<div class="r" style="left:119px;top:433px;width:937px;height:1px;background:#c4c4c4;"></div>
<div class="r" style="left:119px;top:434px;width:937px;height:28px;background:linear-gradient(#f7f7f7,#e4e4e4);"></div>
<div class="t" style="top:246.00px;font-size:13px;color:#383838;left:122.20px;">St</div>
<div class="t" style="top:246.00px;font-size:13px;color:#383838;left:208.40px;">Destination</div>
<div class="t" style="top:246.00px;font-size:13px;color:#383838;left:361.30px;">Account</div>
<div class="t" style="top:246.00px;font-size:13px;color:#383838;left:470.20px;">AccountCl</div>
<div class="t" style="top:246.00px;font-size:13px;color:#383838;left:557.40px;">Name</div>
<div class="t" style="top:246.00px;font-size:13px;color:#383838;left:737.20px;">Remark</div>
<div class="t" style="top:246.00px;font-size:13px;color:#383838;left:844.00px;">Pid</div>
<div class="t" style="top:246.00px;font-size:13px;color:#383838;left:412.80px;width:600px;text-align:right;">Cur</div>
<div class="r" style="left:123px;top:266px;width:23px;height:23px;border-radius:50%;background:#fff;border:1px solid #c9c9c9;"></div>
<div class="t" style="top:272.00px;font-size:12.5px;color:#555;left:-165.50px;width:600px;text-align:center;">1</div>
<div class="t" style="top:272.00px;font-size:10.6px;color:#fff;font-weight:700;left:209.90px;">SRQ/100778-1</div>
<div class="t" style="top:272.00px;font-size:10.6px;color:#fff;font-weight:700;left:362.60px;">SUP/100088</div>
<div class="t" style="top:273.00px;font-size:10.6px;color:#fff;font-weight:700;left:557.90px;letter-spacing:-0.28px;">2037_Testsupplier</div>
<div class="t" style="top:273.00px;font-size:10.6px;color:#fff;font-weight:700;left:844.80px;">6621</div>
<div class="t" style="top:273.00px;font-size:10.6px;color:#fff;font-weight:700;left:438.30px;width:600px;text-align:right;">NOK</div>
<svg class="r" style="left:126px;top:441px;" width="17" height="16" viewBox="0 0 17 16"><rect x="0.5" y="0.5" width="14" height="13" fill="#fff" stroke="#5a6aa8" stroke-width="1"/><rect x="1" y="1" width="13" height="2" fill="#7d8fe0"/><rect x="8" y="7" width="8" height="8" fill="#5b6fd0" stroke="#3f4f9a" stroke-width="0.8"/><path d="M12 8.6 V13.4 M9.6 11 H14.4" stroke="#fff" stroke-width="1.2"/></svg>
<div class="t" style="top:445.00px;font-size:10.2px;color:#111;left:147.60px;letter-spacing:-0.2px;">New SRQ</div>
<svg class="r" style="left:200px;top:441px;" width="17" height="16" viewBox="0 0 17 16"><rect x="0.5" y="0.5" width="14" height="13" fill="#fff" stroke="#5a6aa8" stroke-width="1"/><rect x="1" y="1" width="13" height="2" fill="#7d8fe0"/><rect x="8" y="7" width="8" height="8" fill="#5b6fd0" stroke="#3f4f9a" stroke-width="0.8"/><path d="M12 8.6 V13.4 M9.6 11 H14.4" stroke="#fff" stroke-width="1.2"/></svg>
<div class="t" style="top:445.00px;font-size:10.2px;color:#111;left:221.50px;letter-spacing:-0.2px;">New SPO</div>
<div class="r" style="left:1057px;top:243px;width:17px;height:220px;background:#f1f1f1;"></div>
<div class="r" style="left:1059px;top:270px;width:13px;height:175px;background:#c1c1c1;"></div>
<svg class="r" style="left:1061px;top:249px;" width="9" height="6" viewBox="0 0 9 6"><path d="M0.5 4.5 H7.5 L4 0.5 Z" fill="#505050"/></svg>
<svg class="r" style="left:1061px;top:451px;" width="9" height="6" viewBox="0 0 9 6"><path d="M0.5 0.5 H7.5 L4 4.5 Z" fill="#a0a0a0"/></svg>
<div class="r" style="left:119.1px;top:475.1px;width:17.6px;height:17.6px;border-radius:50%;border:1.3px solid #9a9a9a;background:#fff;"></div>
<div class="t" style="top:480.00px;font-size:10.5px;color:#111;left:140.20px;">Suppliers with Valid Purchprice</div>
<div class="r" style="left:358.0px;top:475.1px;width:17.6px;height:17.6px;border-radius:50%;border:1.3px solid #9a9a9a;background:#fff;"></div>
<div class="t" style="top:480.00px;font-size:10.5px;color:#111;left:379.00px;">Preferred Suppliers Only</div>
<div class="r" style="left:597.1px;top:475.1px;width:17.6px;height:17.6px;border-radius:50%;border:1.3px solid #9a9a9a;background:#fff;"></div>
<div class="r" style="left:602.4px;top:480.4px;width:7px;height:7px;border-radius:50%;background:#333;"></div>
<div class="t" style="top:481.00px;font-size:10.1px;color:#111;left:618.50px;">My open SPO's</div>
<div class="r" style="left:836.2px;top:475.1px;width:17.6px;height:17.6px;border-radius:50%;border:1.3px solid #9a9a9a;background:#fff;"></div>
<div class="t" style="top:481.00px;font-size:10.1px;color:#111;left:857.60px;">SQU Supplier</div>
<div class="r" style="left:118px;top:503px;width:956px;height:298px;background:linear-gradient(#f6f6f6,#e4e4e4 30px,#e4e4e4);border:1px solid #c8c8c8;"></div>
<div class="r" style="left:124px;top:531px;width:944px;height:264px;background:#e4e4e4;border:1px solid #ee7d3c;"></div>
<div class="r" style="left:124px;top:509px;width:107px;height:22px;background:linear-gradient(#fff,#f4f4f4);border:1px solid #ee7d3c;border-bottom:none;border-radius:3px 3px 0 0;"></div>
<div class="r" style="left:231px;top:509px;width:133px;height:22px;background:linear-gradient(#fafafa,#e9e9e9);border:1px solid #cfcfcf;border-bottom:none;border-radius:3px 3px 0 0;"></div>
<div class="r" style="left:364px;top:509px;width:115px;height:22px;background:linear-gradient(#fafafa,#e9e9e9);border:1px solid #cfcfcf;border-bottom:none;border-radius:3px 3px 0 0;"></div>
<div class="t" style="top:514.00px;font-size:13.8px;color:#333;left:133.40px;">Supplier Items</div>
<div class="t" style="top:514.00px;font-size:13.8px;color:#333;left:239.70px;">Deliveries to Stock</div>
<div class="t" style="top:514.00px;font-size:13.8px;color:#333;left:372.50px;">Standard prices</div>
<div class="t" style="top:547.00px;font-size:12.5px;color:#6b6b6b;left:136.00px;">View</div>
<div class="r" style="left:177px;top:543px;width:104px;height:19px;background:#fff;border:1px solid #cfcfcf;"></div>
<div class="t" style="top:547.00px;font-size:10.6px;color:#111;left:181.50px;">Backlog</div>
<svg class="r" style="left:268px;top:550px;" width="9" height="6" viewBox="0 0 9 6"><path d="M0.5 0.5 H7.5 L4 4.5 Z" fill="#333"/></svg>
<svg class="r" style="left:312px;top:541px;" width="20" height="20" viewBox="0 0 20 20"><path d="M5.5 9.8 V2.5 H11.8 L17.5 8.2 V17.2 H5.5" fill="#fff" stroke="#222" stroke-width="1.1"/><path d="M11.8 2.5 V8.2 H17.5" fill="none" stroke="#222" stroke-width="1.1"/><rect x="1.6" y="10.4" width="15" height="6" fill="#fff"/><path d="M6.2 11.4 H3.1 Q2.3 11.4 2.3 12.5 Q2.3 13.5 3.1 13.5 H5.5 Q6.4 13.5 6.4 14.6 Q6.4 15.7 5.5 15.7 H2.2 M8.3 11.1 V14.7 Q8.3 15.7 9.6 15.7 Q10.9 15.7 10.9 14.7 V11.1 M12.6 16 V11.4 H15.1 Q16.1 11.4 16.1 12.6 Q16.1 13.8 15.1 13.8 H12.6" fill="none" stroke="#222" stroke-width="0.9"/></svg>
<div class="t" style="top:547.00px;font-size:12.5px;color:#6b6b6b;left:654.40px;">Filter</div>
<div class="r" style="left:695px;top:542px;width:194px;height:18px;background:#fff;border:1px solid #cfcfcf;"></div>
<svg class="r" style="left:888.6px;top:543.8px;" width="12" height="12" viewBox="0 0 12 12"><path d="M0.7 2.8 H4.5 V0.7 L10.1 5.9 L4.5 11.1 V9 H0.7 Z" fill="#f6d21e" stroke="#1a1a1a" stroke-width="1"/></svg>
<div class="t" style="top:547.00px;font-size:12.5px;color:#6b6b6b;left:962.00px;">Cur</div>
<div class="r" style="left:984px;top:542px;width:72px;height:20px;background:#fff;border:1px solid #cfcfcf;"></div>
<div class="t" style="top:547.00px;font-size:10.6px;color:#111;left:988.50px;">NOK</div>
<svg class="r" style="left:1042px;top:549px;" width="9" height="6" viewBox="0 0 9 6"><path d="M0.5 0.5 H7.5 L4 4.5 Z" fill="#333"/></svg>
<div class="r" style="left:135px;top:578px;width:922px;height:193px;background:#fff;border:1px solid #c6c6c6;border-right:none;"></div>
<div class="r" style="left:1056px;top:608px;width:1px;height:126px;background:#c6c6c6;"></div>
<div class="r" style="left:136px;top:579px;width:920px;height:29px;background:linear-gradient(#f5f5f5,#e3e3e3);"></div>
<div class="r" style="left:136px;top:626px;width:920px;height:18px;background:#f4f4f4;"></div>
<div class="r" style="left:136px;top:662px;width:920px;height:18px;background:#f4f4f4;"></div>
<div class="r" style="left:136px;top:698px;width:920px;height:18px;background:#f4f4f4;"></div>
<div class="r" style="left:182px;top:579px;width:1px;height:155px;background:#c8c8c8;"></div>
<div class="r" style="left:254px;top:579px;width:1px;height:155px;background:#c8c8c8;"></div>
<div class="r" style="left:300px;top:579px;width:1px;height:155px;background:#c8c8c8;"></div>
<div class="r" style="left:396px;top:579px;width:1px;height:155px;background:#c8c8c8;"></div>
<div class="r" style="left:559px;top:579px;width:1px;height:155px;background:#c8c8c8;"></div>
<div class="r" style="left:640px;top:579px;width:1px;height:155px;background:#c8c8c8;"></div>
<div class="r" style="left:702px;top:579px;width:1px;height:155px;background:#c8c8c8;"></div>
<div class="r" style="left:745px;top:579px;width:1px;height:155px;background:#c8c8c8;"></div>
<div class="r" style="left:796px;top:579px;width:1px;height:155px;background:#c8c8c8;"></div>
<div class="r" style="left:897px;top:579px;width:1px;height:155px;background:#c8c8c8;"></div>
<div class="r" style="left:1026px;top:579px;width:1px;height:155px;background:#c8c8c8;"></div>
<div class="r" style="left:1041px;top:608px;width:1px;height:126px;background:#c8c8c8;"></div>
<div class="r" style="left:136px;top:734px;width:920px;height:1px;background:#c6c6c6;"></div>
<div class="r" style="left:1027px;top:579px;width:29px;height:29px;background:#e4e4e4;"></div>
<div class="r" style="left:136px;top:735px;width:890px;height:35px;background:linear-gradient(#f8f8f8,#e2e2e2);"></div>
<div class="r" style="left:1026px;top:735px;width:31px;height:35px;background:#e4e4e4;"></div>
<div class="r" style="left:1026px;top:735px;width:1px;height:35px;background:#c8c8c8;"></div>
<div class="t" style="top:588.00px;font-size:13.2px;color:#383838;left:139.20px;">St1</div>
<div class="t" style="top:588.00px;font-size:13.2px;color:#383838;left:-349.40px;width:600px;text-align:right;">NetQty</div>
<div class="t" style="top:588.00px;font-size:13.2px;color:#383838;left:257.90px;">Unit</div>
<div class="t" style="top:588.00px;font-size:13.2px;color:#383838;left:304.00px;">Docid</div>
<div class="t" style="top:588.00px;font-size:13.2px;color:#383838;left:563.00px;">Account</div>
<div class="t" style="top:588.00px;font-size:13.2px;color:#383838;left:643.70px;">Name</div>
<div class="t" style="top:588.00px;font-size:13.2px;color:#383838;left:706.20px;">Req</div>
<div class="t" style="top:588.00px;font-size:13.2px;color:#383838;left:749.20px;">Conf</div>
<div class="t" style="top:588.00px;font-size:13.2px;color:#383838;left:294.20px;width:600px;text-align:right;">Price/NOK</div>
<div class="t" style="top:588.00px;font-size:13.2px;color:#383838;left:423.00px;width:600px;text-align:right;">Amount/NOK</div>
<div class="t" style="top:748.00px;font-size:10.5px;color:#111;font-weight:700;left:874.80px;">Position 1 of 0</div>
<div class="r" style="left:957px;top:741px;width:27.5px;height:22.5px;background:linear-gradient(#fafafa,#ececec);border:1px solid #c9c9c9;border-radius:3px;"></div>
<svg class="r" style="left:967.5px;top:748.4px;" width="8" height="10" viewBox="0 0 8 10"><path d="M6.8 1.4 L0.8 4.6 L6.8 7.8 Z" fill="#48423e"/></svg>
<div class="r" style="left:990px;top:741px;width:27.5px;height:22.5px;background:linear-gradient(#fafafa,#ececec);border:1px solid #c9c9c9;border-radius:3px;"></div>
<svg class="r" style="left:1000.5px;top:748.4px;" width="8" height="10" viewBox="0 0 8 10"><path d="M0.6 1.4 L6.6 4.6 L0.6 7.8 Z" fill="#48423e"/></svg>
<div class="t" style="top:773.00px;font-size:10.6px;color:#111;left:190.20px;">0.00</div>
<div class="r" style="left:1080px;top:82px;width:60px;height:40px;overflow:hidden;"><div class="r" style="left:19px;top:-2.8px;width:22px;height:22px;border-radius:50%;background:#0c0c0c;border:2px solid #fff;box-shadow:1px 2px 4px rgba(0,0,0,0.55);"></div><svg class="r" style="left:23px;top:1px" width="14" height="14" viewBox="0 0 14 14"><path d="M3.1 3.1 L10.9 10.9 M10.9 3.1 L3.1 10.9" stroke="#fff" stroke-width="2.5"/></svg></div>
</body></html>
